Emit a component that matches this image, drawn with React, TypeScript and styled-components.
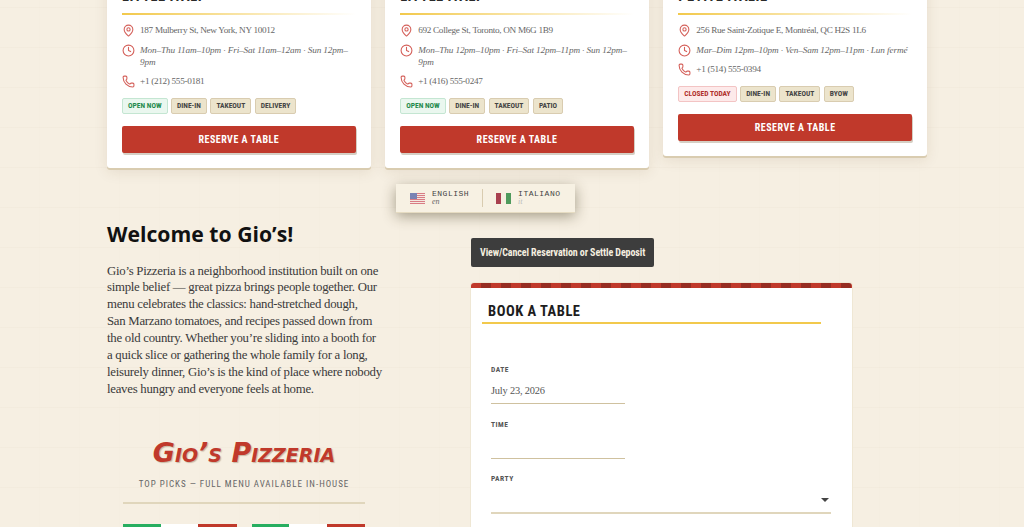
import React from 'react';
import styled, { createGlobalStyle } from 'styled-components';
import { MapPin, Clock, Phone } from 'lucide-react';

const condensed = `"Liberation Sans Narrow", "Roboto Condensed", Roboto, sans-serif`;
const serif = `"Liberation Serif", serif`;

const GlobalStyle = createGlobalStyle`
  html, body {
    margin: 0;
    height: 527px;
    overflow: hidden;
  }
  body {
    background-color: #f6efe2;
    background-image:
      repeating-linear-gradient(0deg, transparent 0 39px, rgba(120, 90, 40, 0.025) 39px 40px),
      repeating-linear-gradient(90deg, transparent 0 39px, rgba(120, 90, 40, 0.008) 39px 40px);
    font-family: ${serif};
  }
`;

const Page = styled.div`
  width: 820px;
  margin: -32px 0 0 107px;
`;

const CardRow = styled.div`
  display: grid;
  grid-template-columns: repeat(3, 1fr);
  gap: 14.5px;
  align-items: start;
`;

const Card = styled.section`
  background: #fff;
  border-radius: 3px;
  padding: 19px 15px 15px;
  box-shadow: 0 2px 0 #d9ccb0, 0 4px 14px rgba(90, 60, 20, 0.1);
`;

const CardTitle = styled.h3`
  margin: 0 0 6px;
  font-family: ${condensed};
  font-weight: 700;
  font-size: 14.5px;
  line-height: 20px;
  letter-spacing: 0.5px;
  text-transform: uppercase;
  color: #2a2a2a;
`;

const TitleRule = styled.div`
  height: 1.5px;
  margin-bottom: 9.5px;
  background: linear-gradient(90deg, #f2c94c, rgba(242, 201, 76, 0));
`;

const InfoRow = styled.div<{ $italic?: boolean }>`
  display: flex;
  gap: 5px;
  margin-bottom: 6.5px;
  font-size: 9.2px;
  line-height: 12.5px;
  letter-spacing: ${({ $italic }) => ($italic ? '-0.1px' : '-0.3px')};
  font-style: ${({ $italic }) => ($italic ? 'italic' : 'normal')};
  color: #666;
  svg {
    flex: none;
    color: #d4605a;
  }
`;

const Tags = styled.div`
  display: flex;
  gap: 3.5px;
  margin: 10px 0 12px;
`;

const Tag = styled.span<{ $tone?: 'open' | 'closed' }>`
  height: 14px;
  padding: 0 5px;
  border: 1px solid ${({ $tone }) => ($tone === 'open' ? '#c4e6d2' : $tone === 'closed' ? '#f3c4c4' : '#d9ccb0')};
  border-radius: 2px;
  background: ${({ $tone }) => ($tone === 'open' ? '#eaf7ef' : $tone === 'closed' ? '#fdeaea' : '#ece4cc')};
  color: ${({ $tone }) => ($tone === 'open' ? '#1f8a4c' : $tone === 'closed' ? '#b0302a' : '#444')};
  font-family: ${condensed};
  font-weight: 700;
  font-size: 7.5px;
  line-height: 14px;
  white-space: nowrap;
`;

const ReserveButton = styled.button`
  display: block;
  width: 100%;
  height: 27px;
  border: 0;
  border-radius: 2px;
  background: #c0392b;
  color: #fff;
  font-family: ${condensed};
  font-weight: 700;
  font-size: 10px;
  letter-spacing: 0.5px;
  box-shadow: 1px 2px 0 #d5cfc4;
`;

const LangBarWrap = styled.div`
  display: flex;
  margin-top: 16px;
  padding-left: 289px;
`;

const LangBar = styled.div`
  display: flex;
  align-items: center;
  height: 28px;
  padding: 0 14px;
  background: #f7f1e3;
  box-shadow: 0 1px 0 #e6dcc2, 0 4px 14px rgba(60, 50, 20, 0.45);
`;

const LangItem = styled.div`
  display: flex;
  align-items: center;
  gap: 7px;
`;

const LangText = styled.div`
  font-family: "Liberation Mono", monospace;
  font-size: 8px;
  line-height: 8px;
  letter-spacing: 0.5px;
  color: #444;
  small {
    display: block;
    font-family: ${serif};
    font-style: italic;
    font-size: 8px;
    letter-spacing: 0;
    color: #666;
  }
  small[data-faded] {
    color: #bbb;
  }
`;

const LangDivider = styled.div`
  width: 1px;
  height: 18px;
  margin: 0 13px;
  background: #d9ccb0;
`;

const Columns = styled.div`
  display: flex;
  gap: 87px;
  margin-top: 7px;
`;

const LeftColumn = styled.div`
  flex: none;
  width: 277px;
`;

const RightColumn = styled.div`
  flex: none;
  width: 381px;
  padding-top: 19px;
`;

const Welcome = styled.h2`
  margin: 0 0 13.6px;
  font-family: "Open Sans", sans-serif;
  font-weight: 700;
  font-size: 21.2px;
  line-height: 30px;
  color: #111;
`;

const Intro = styled.p`
  margin: 0;
  font-size: 12.8px;
  line-height: 16.86px;
  letter-spacing: -0.27px;
  color: #3a3a3a;
`;

const MenuHead = styled.div`
  margin-top: 41px;
  padding: 0 16px;
  width: 242px;
  text-align: center;
`;

const Brand = styled.div`
  font-family: "DejaVu Sans", sans-serif;
  font-weight: 700;
  font-style: italic;
  font-variant: small-caps;
  font-size: 27px;
  line-height: 30px;
  white-space: nowrap;
  margin: 0 -20px;
  color: #c0392b;
  text-shadow: 1px 1px 1px rgba(90, 60, 20, 0.3);
`;

const Tagline = styled.div`
  margin-top: 10px;
  font-family: ${condensed};
  font-size: 9px;
  line-height: 12px;
  letter-spacing: 1px;
  white-space: nowrap;
  color: #666;
`;

const MenuRule = styled.div`
  height: 2px;
  margin-top: 12px;
  background: #e0d6bc;
`;

const MenuCards = styled.div`
  display: grid;
  grid-template-columns: 1fr 1fr;
  gap: 15px;
  width: 242px;
  margin: 20px 0 0 16px;
`;

const MenuCard = styled.div`
  height: 3px;
  background: linear-gradient(90deg, #27ae60 0 33%, #fff 33% 66%, #c0392b 66%);
`;

const ManageButton = styled.button`
  display: block;
  height: 29px;
  padding: 0 9px;
  border: 0;
  border-radius: 2px;
  background: #3d3d3d;
  color: #f5efe0;
  font-family: ${condensed};
  font-weight: 700;
  font-size: 10px;
  letter-spacing: -0.1px;
`;

const BookCard = styled.section`
  margin-top: 16px;
  height: 300px;
  border-radius: 3px 3px 0 0;
  background: #fff;
  box-shadow: 0 0 0 1px #efe7d4;
  overflow: hidden;
`;

const Stripe = styled.div`
  height: 5px;
  background: repeating-linear-gradient(90deg, #c0392b 0 10px, #962d22 10px 20px);
`;

const BookTitle = styled.h2`
  margin: 14px 0 0 11px;
  padding: 0 0 0 6px;
  width: 333px;
  border-bottom: 2px solid #f2c94c;
  font-family: ${condensed};
  font-weight: 700;
  font-size: 14.5px;
  line-height: 20px;
  letter-spacing: 0.5px;
  color: #1d1d1d;
`;

const Form = styled.div`
  padding: 41px 20px 0;
`;

const Field = styled.div<{ $full?: boolean }>`
  width: ${({ $full }) => ($full ? '340px' : '134px')};
  margin-bottom: 15.5px;
`;

const FieldLabel = styled.label`
  display: block;
  font-family: ${condensed};
  font-weight: 700;
  font-size: 7.5px;
  line-height: 10px;
  letter-spacing: 0.5px;
  color: #555;
`;

const FieldValue = styled.div<{ $full?: boolean }>`
  position: relative;
  height: 25px;
  margin-top: 3px;
  border-bottom: ${({ $full }) => ($full ? '2px solid #e0d6bc' : '1px solid #cfc19f')};
  font-size: 10.4px;
  line-height: 26px;
  letter-spacing: -0.2px;
  color: #555;
`;

const Caret = styled.span`
  position: absolute;
  right: 2px;
  top: 11px;
  border-style: solid;
  border-width: 4px 4px 0;
  border-color: #444 transparent transparent;
`;

const USFlag = () => (
  <svg width="15" height="11" viewBox="0 0 15 11">
    <rect width="15" height="11" fill="#f4e9e0" />
    {[0, 2, 4, 6, 8, 10].map((y) => (
      <rect key={y} y={y} width="15" height="1" fill="#d97c84" />
    ))}
    <rect width="7" height="6" fill="#7a83b4" />
  </svg>
);

const ITFlag = () => (
  <svg width="15" height="11" viewBox="0 0 15 11">
    <rect width="5" height="11" fill="#a8404f" />
    <rect x="5" width="5" height="11" fill="#f5efe0" />
    <rect x="10" width="5" height="11" fill="#4f9a5c" />
  </svg>
);

const LOCATIONS = [
  {
    name: 'Little Italy',
    address: '187 Mulberry St, New York, NY 10012',
    hours: 'Mon–Thu 11am–10pm · Fri–Sat 11am–12am · Sun 12pm–9pm',
    phone: '+1 (212) 555-0181',
    status: 'OPEN NOW',
    tone: 'open' as const,
    tags: ['DINE-IN', 'TAKEOUT', 'DELIVERY'],
  },
  {
    name: 'Little Italy',
    address: '692 College St, Toronto, ON M6G 1B9',
    hours: 'Mon–Thu 12pm–10pm · Fri–Sat 12pm–11pm · Sun 12pm–9pm',
    phone: '+1 (416) 555-0247',
    status: 'OPEN NOW',
    tone: 'open' as const,
    tags: ['DINE-IN', 'TAKEOUT', 'PATIO'],
  },
  {
    name: 'Petite Italie',
    address: '256 Rue Saint-Zotique E, Montréal, QC H2S 1L6',
    hours: 'Mar–Dim 12pm–10pm · Ven–Sam 12pm–11pm · Lun fermé',
    phone: '+1 (514) 555-0394',
    status: 'CLOSED TODAY',
    tone: 'closed' as const,
    tags: ['DINE-IN', 'TAKEOUT', 'BYOW'],
  },
];

export default function App() {
  return (
    <Page>
      <GlobalStyle />
      <CardRow>
        {LOCATIONS.map((loc) => (
          <Card key={loc.address}>
            <CardTitle>{loc.name}</CardTitle>
            <TitleRule />
            <InfoRow>
              <MapPin size={13} />
              {loc.address}
            </InfoRow>
            <InfoRow $italic>
              <Clock size={13} />
              <span>{loc.hours}</span>
            </InfoRow>
            <InfoRow>
              <Phone size={13} />
              {loc.phone}
            </InfoRow>
            <Tags>
              <Tag $tone={loc.tone}>{loc.status}</Tag>
              {loc.tags.map((t) => (
                <Tag key={t}>{t}</Tag>
              ))}
            </Tags>
            <ReserveButton>RESERVE A TABLE</ReserveButton>
          </Card>
        ))}
      </CardRow>

      <LangBarWrap>
        <LangBar>
          <LangItem>
            <USFlag />
            <LangText>
              ENGLISH
              <small>en</small>
            </LangText>
          </LangItem>
          <LangDivider />
          <LangItem>
            <ITFlag />
            <LangText>
              ITALIANO
              <small data-faded>it</small>
            </LangText>
          </LangItem>
        </LangBar>
      </LangBarWrap>

      <Columns>
        <LeftColumn>
          <Welcome>Welcome to Gio’s!</Welcome>
          <Intro>
            Gio’s Pizzeria is a neighborhood institution built on one simple belief — great pizza
            brings people together. Our menu celebrates the classics: hand-stretched dough,
            San&nbsp;Marzano tomatoes, and recipes passed down from the old country. Whether you’re
            sliding into a booth for a&nbsp;quick slice or gathering the whole family for a long,
            leisurely dinner, Gio’s is the kind of place where nobody leaves hungry and everyone
            feels at home.
          </Intro>
          <MenuHead>
            <Brand>Gio’s Pizzeria</Brand>
            <Tagline>TOP PICKS — FULL MENU AVAILABLE IN-HOUSE</Tagline>
            <MenuRule />
          </MenuHead>
          <MenuCards>
            <MenuCard />
            <MenuCard />
          </MenuCards>
        </LeftColumn>
        <RightColumn>
          <ManageButton>View/Cancel Reservation or Settle Deposit</ManageButton>
          <BookCard>
            <Stripe />
            <BookTitle>BOOK A TABLE</BookTitle>
            <Form>
              <Field>
                <FieldLabel>DATE</FieldLabel>
                <FieldValue>July 23, 2026</FieldValue>
              </Field>
              <Field>
                <FieldLabel>TIME</FieldLabel>
                <FieldValue />
              </Field>
              <Field $full>
                <FieldLabel>PARTY</FieldLabel>
                <FieldValue $full>
                  <Caret />
                </FieldValue>
              </Field>
            </Form>
          </BookCard>
        </RightColumn>
      </Columns>
    </Page>
  );
}
